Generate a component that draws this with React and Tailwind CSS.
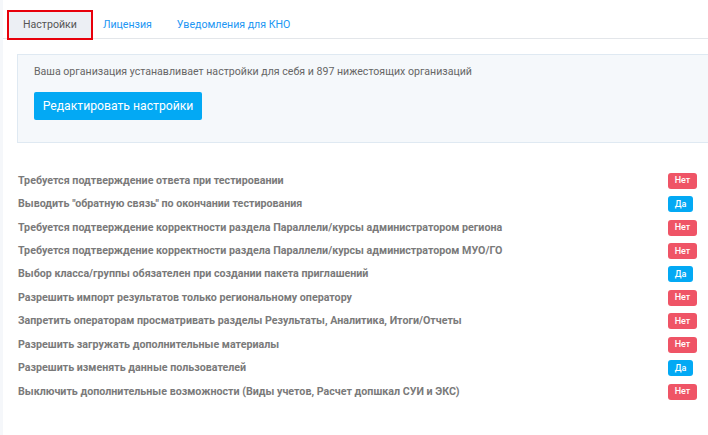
const settings = [
  ["Требуется подтверждение ответа при тестировании", false],
  ['Выводить "обратную связь" по окончании тестирования', true],
  ["Требуется подтверждение корректности раздела Параллели/курсы администратором региона", false],
  ["Требуется подтверждение корректности раздела Параллели/курсы администратором МУО/ГО", false],
  ["Выбор класса/группы обязателен при создании пакета приглашений", true],
  ["Разрешить импорт результатов только региональному оператору", false],
  ["Запретить операторам просматривать разделы Результаты, Аналитика, Итоги/Отчеты", false],
  ["Разрешить загружать дополнительные материалы", false],
  ["Разрешить изменять данные пользователей", true],
  ["Выключить дополнительные возможности (Виды учетов, Расчет допшкал СУИ и ЭКС)", false],
];

function Badge({ on }) {
  return on ? (
    <span className="inline-flex h-4 w-[25px] items-center justify-center rounded-[3px] bg-[#03a9f4] text-[9px] font-medium leading-none text-white">
      Да
    </span>
  ) : (
    <span className="inline-flex h-4 w-[29px] items-center justify-center rounded-[3px] bg-[#ef5466] text-[9px] font-medium leading-none text-white">
      Нет
    </span>
  );
}

export default function App() {
  return (
    <div className="flex h-[435px] w-[708px] overflow-hidden bg-white font-['Roboto',sans-serif]">
      <div className="w-[3px] shrink-0 bg-[#f5f7fa]" />
      <div className="flex w-[740px] shrink-0 flex-col">
        <div className="flex border-b border-[#e3e6ea] pl-[6px] pt-[12px] text-[10.6px]">
          <div className="flex h-[26px] items-center bg-[#eceff4] px-[14px] text-[#555] ring-2 ring-[#e8000b]">
            Настройки
          </div>
          <div className="flex h-[26px] items-center px-[12px] text-[#2196f3]">Лицензия</div>
          <div className="flex h-[26px] items-center px-[13px] text-[#2196f3]">Уведомления для КНО</div>
        </div>

        <div className="ml-[14px] mt-[15px] h-[89px] border border-[#dfe9f2] bg-[#f5f8fb] pl-[16px] pt-[9px]">
          <p className="text-[10.6px] leading-[16px] text-[#666]">
            Ваша организация устанавливает настройки для себя и 897 нижестоящих организаций
          </p>
          <button className="mt-[12px] h-[28px] w-[168px] whitespace-nowrap rounded-[2px] bg-[#03a9f4] text-[12.2px] text-white">
            Редактировать настройки
          </button>
        </div>

        <div className="ml-[15px] mt-[26px] flex flex-col">
          {settings.map(([label, on], i) => (
            <div key={i} className="flex h-[23.45px] items-center">
              <div className="w-[650px] text-[10.7px] font-bold text-[#7a7a7a]">{label}</div>
              <Badge on={on} />
            </div>
          ))}
        </div>
      </div>
    </div>
  );
}
